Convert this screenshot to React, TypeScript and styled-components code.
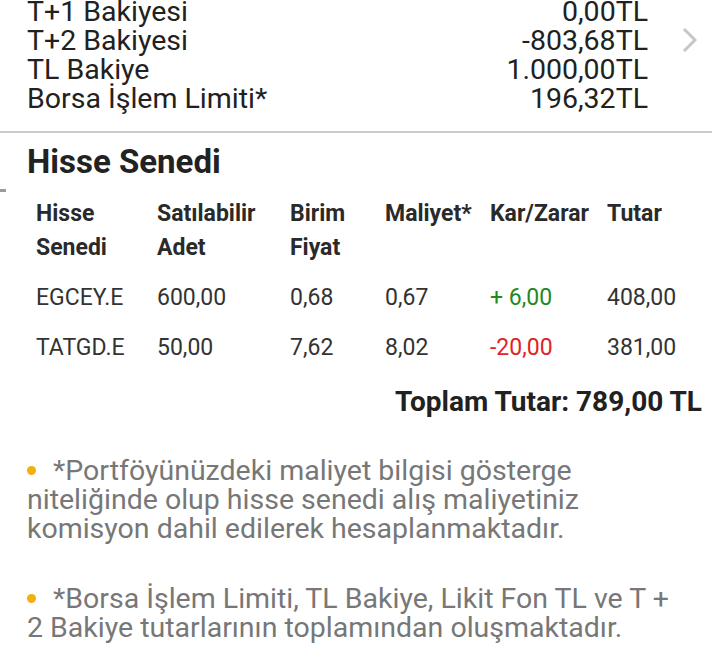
import styled, { createGlobalStyle } from "styled-components"

const GlobalStyle = createGlobalStyle`
    html, body {
        margin: 0;
        padding: 0;
        background: #ffffff;
    }
    body {
        font-family: Roboto, "Noto Sans", sans-serif;
        color: #212121;
    }
`

const balances = [
    { label: "T+1 Bakiyesi", value: "0,00TL" },
    { label: "T+2 Bakiyesi", value: "-803,68TL" },
    { label: "TL Bakiye", value: "1.000,00TL" },
    { label: "Borsa İşlem Limiti*", value: "196,32TL" },
]

type Tone = "up" | "down"

const stocks: { code: string; qty: string; price: string; cost: string; pl: string; tone: Tone; total: string }[] = [
    { code: "EGCEY.E", qty: "600,00", price: "0,68", cost: "0,67", pl: "+ 6,00", tone: "up", total: "408,00" },
    { code: "TATGD.E", qty: "50,00", price: "7,62", cost: "8,02", pl: "-20,00", tone: "down", total: "381,00" },
]

export default function App() {
    return (
        <Page>
            <GlobalStyle />
            <BalanceSection>
                <BalanceList>
                    {balances.map(b => (
                        <BalanceRow key={b.label}>
                            <span>{b.label}</span>
                            <span>{b.value}</span>
                        </BalanceRow>
                    ))}
                </BalanceList>
                <Chevron>
                    <svg width="14" height="24" viewBox="0 0 14 24">
                        <path d="M2 2 L12 12 L2 22" fill="none" stroke="#c6c6c6" strokeWidth="3" strokeLinecap="square" />
                    </svg>
                </Chevron>
            </BalanceSection>
            <Divider />
            <Heading>Hisse Senedi</Heading>
            <TableWrap>
                <Tick />
                <Table>
                    <HeadCell>Hisse<br />Senedi</HeadCell>
                    <HeadCell>Satılabilir<br />Adet</HeadCell>
                    <HeadCell>Birim<br />Fiyat</HeadCell>
                    <HeadCell>Maliyet*</HeadCell>
                    <HeadCell>Kar/Zarar</HeadCell>
                    <HeadCell>Tutar</HeadCell>
                    {stocks.map(s => (
                        <Row key={s.code}>
                            <Cell>{s.code}</Cell>
                            <Cell>{s.qty}</Cell>
                            <Cell>{s.price}</Cell>
                            <Cell>{s.cost}</Cell>
                            <Cell $tone={s.tone}>{s.pl}</Cell>
                            <Cell>{s.total}</Cell>
                        </Row>
                    ))}
                </Table>
            </TableWrap>
            <Total>Toplam Tutar: 789,00 TL</Total>
            <Notes>
                <Note><Dot />*Portföyünüzdeki maliyet bilgisi gösterge niteliğinde olup hisse senedi alış maliyetiniz komisyon dahil edilerek hesaplanmaktadır.</Note>
                <Note><Dot />*Borsa İşlem Limiti, TL Bakiye, Likit Fon TL ve T + 2 Bakiye tutarlarının toplamından oluşmaktadır.</Note>
            </Notes>
        </Page>
    )
}

const Page = styled.div`
    width: 712px;
    min-height: 661px;
    overflow: hidden;
    background: #ffffff;
`

const BalanceSection = styled.div`
    display: flex;
    align-items: flex-start;
    margin-top: -3px;
    padding-left: 27px;
    padding-right: 15px;
`

const BalanceList = styled.div`
    flex: 1;
    padding-right: 35px;
`

const BalanceRow = styled.div`
    display: flex;
    justify-content: space-between;
    font-size: 28.5px;
    line-height: 29px;
    color: #212121;
`

const Chevron = styled.div`
    width: 14px;
    margin-top: 31px;
    display: flex;
`

const Divider = styled.div`
    height: 2px;
    background: #cbcbcb;
    margin-top: 18px;
`

const Heading = styled.h2`
    margin: 11px 0 0 27px;
    font-size: 33px;
    line-height: 36px;
    font-weight: 700;
    color: #222222;
`

const TableWrap = styled.div`
    position: relative;
    margin-top: 17px;
    padding-left: 36px;
`

const Tick = styled.span`
    position: absolute;
    left: 0;
    top: -8px;
    width: 6px;
    height: 3px;
    background: #9a9a9a;
`

const Table = styled.div`
    display: grid;
    grid-template-columns: 121px 133px 95px 105px 117px 1fr;
`

const HeadCell = styled.div`
    font-size: 23px;
    line-height: 34px;
    font-weight: 700;
    color: #2a2a2a;
    margin-bottom: 8px;
`

const Row = styled.div`
    display: contents;
`

const Cell = styled.div<{ $tone?: Tone }>`
    font-size: 23px;
    line-height: 50px;
    color: ${p => p.$tone === "up" ? "#1e8a1e" : p.$tone === "down" ? "#e02424" : "#333333"};
`

const Total = styled.div`
    margin-top: 14px;
    padding-right: 10px;
    text-align: right;
    font-size: 28px;
    line-height: 30px;
    font-weight: 700;
    color: #212121;
`

const Notes = styled.div`
    margin-top: 39px;
    padding: 0 32px 0 27px;
    display: flex;
    flex-direction: column;
    gap: 41px;
`

const Note = styled.p`
    margin: 0;
    font-size: 28.5px;
    line-height: 29px;
    color: #777777;
`

const Dot = styled.span`
    display: inline-block;
    width: 9px;
    height: 9px;
    border-radius: 50%;
    background: #f6ae0b;
    vertical-align: 5px;
    margin-right: 17px;
`
